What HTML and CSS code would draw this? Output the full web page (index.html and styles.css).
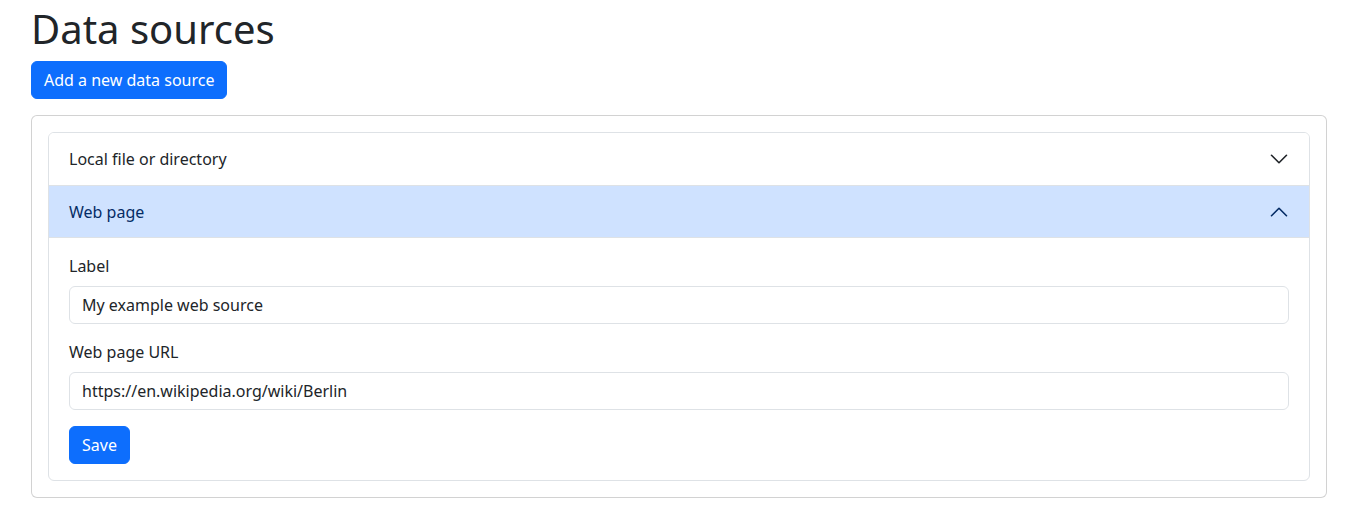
FILE: index.html
```html
<!DOCTYPE html>
<html lang="en">
<head>
<meta charset="utf-8">
<title>Data sources</title>
<link rel="stylesheet" href="styles.css">
</head>
<body>
<main class="container">
  <h1 class="title">Data sources</h1>
  <button class="btn btn-primary" type="button">Add a new data source</button>
  <section class="card">
    <div class="card-body">
      <div class="accordion">
        <div class="accordion-item">
          <h2 class="accordion-header">
            <button class="accordion-button collapsed" type="button">
              <span>Local file or directory</span>
              <svg class="chevron" viewBox="0 0 16 16" fill="none" stroke="currentColor" stroke-linecap="round" stroke-linejoin="round"><path d="M2 5L8 11L14 5"/></svg>
            </button>
          </h2>
        </div>
        <div class="accordion-item">
          <h2 class="accordion-header">
            <button class="accordion-button active" type="button">
              <span>Web page</span>
              <svg class="chevron up" viewBox="0 0 16 16" fill="none" stroke="currentColor" stroke-linecap="round" stroke-linejoin="round"><path d="M2 5L8 11L14 5"/></svg>
            </button>
          </h2>
          <div class="accordion-body">
            <div class="field">
              <label class="form-label" for="label">Label</label>
              <input class="form-control" id="label" type="text" value="My example web source">
            </div>
            <div class="field">
              <label class="form-label" for="url">Web page URL</label>
              <input class="form-control" id="url" type="text" value="https://en.wikipedia.org/wiki/Berlin">
            </div>
            <button class="btn btn-primary" type="button">Save</button>
          </div>
        </div>
      </div>
    </div>
  </section>
</main>
</body>
</html>
```

FILE: styles.css
```css
* { box-sizing: border-box; }

html, body {
  margin: 0;
  padding: 0;
  background: #fff;
}

body {
  font-family: "Noto Sans", "DejaVu Sans", sans-serif;
  font-size: 16px;
  line-height: 1.5;
  color: #212529;
}

.container {
  width: 1296px;
  margin-left: 31px;
  padding-top: 5px;
  display: flex;
  flex-direction: column;
  align-items: flex-start;
}

.title {
  margin: 0 0 8px;
  font-size: 40px;
  font-weight: 400;
  line-height: 1.2;
}

.btn {
  font-family: inherit;
  font-size: 16px;
  line-height: 24px;
  padding: 6px 12px;
  border: 1px solid transparent;
  border-radius: 6px;
  cursor: pointer;
}

.btn-primary {
  background: #0d6efd;
  border-color: #0d6efd;
  color: #fff;
}

.card {
  align-self: stretch;
  margin-top: 16px;
  border: 1px solid rgba(0, 0, 0, 0.175);
  border-radius: 6px;
  background: #fff;
}

.card-body {
  padding: 16px;
}

.accordion {
  border: 1px solid #dee2e6;
  border-radius: 6px;
  overflow: hidden;
}

.accordion-item + .accordion-item {
  border-top: 1px solid #dee2e6;
}

.accordion-header {
  margin: 0;
  font-size: 16px;
  font-weight: 400;
}

.accordion-button {
  display: flex;
  align-items: center;
  width: 100%;
  padding: 14px 20px;
  font-family: inherit;
  font-size: 16px;
  line-height: 24px;
  color: #212529;
  background: #fff;
  border: 0;
  text-align: left;
  cursor: pointer;
}

.accordion-button.active {
  color: #052c65;
  background: #cfe2ff;
  border-bottom: 1px solid #dee2e6;
  padding-bottom: 13px;
}

.chevron {
  width: 20px;
  height: 20px;
  margin-left: auto;
  stroke-width: 1.3;
}

.chevron.up {
  transform: rotate(180deg);
}

.accordion-body {
  padding: 16px 20px;
  display: flex;
  flex-direction: column;
  align-items: flex-start;
}

.field {
  align-self: stretch;
  margin-bottom: 16px;
}

.form-label {
  display: block;
  margin-bottom: 8px;
}

.form-control {
  display: block;
  width: 100%;
  padding: 6px 12px;
  font-family: inherit;
  font-size: 16px;
  line-height: 24px;
  color: #212529;
  background: #fff;
  border: 1px solid #dee2e6;
  border-radius: 6px;
}
```
